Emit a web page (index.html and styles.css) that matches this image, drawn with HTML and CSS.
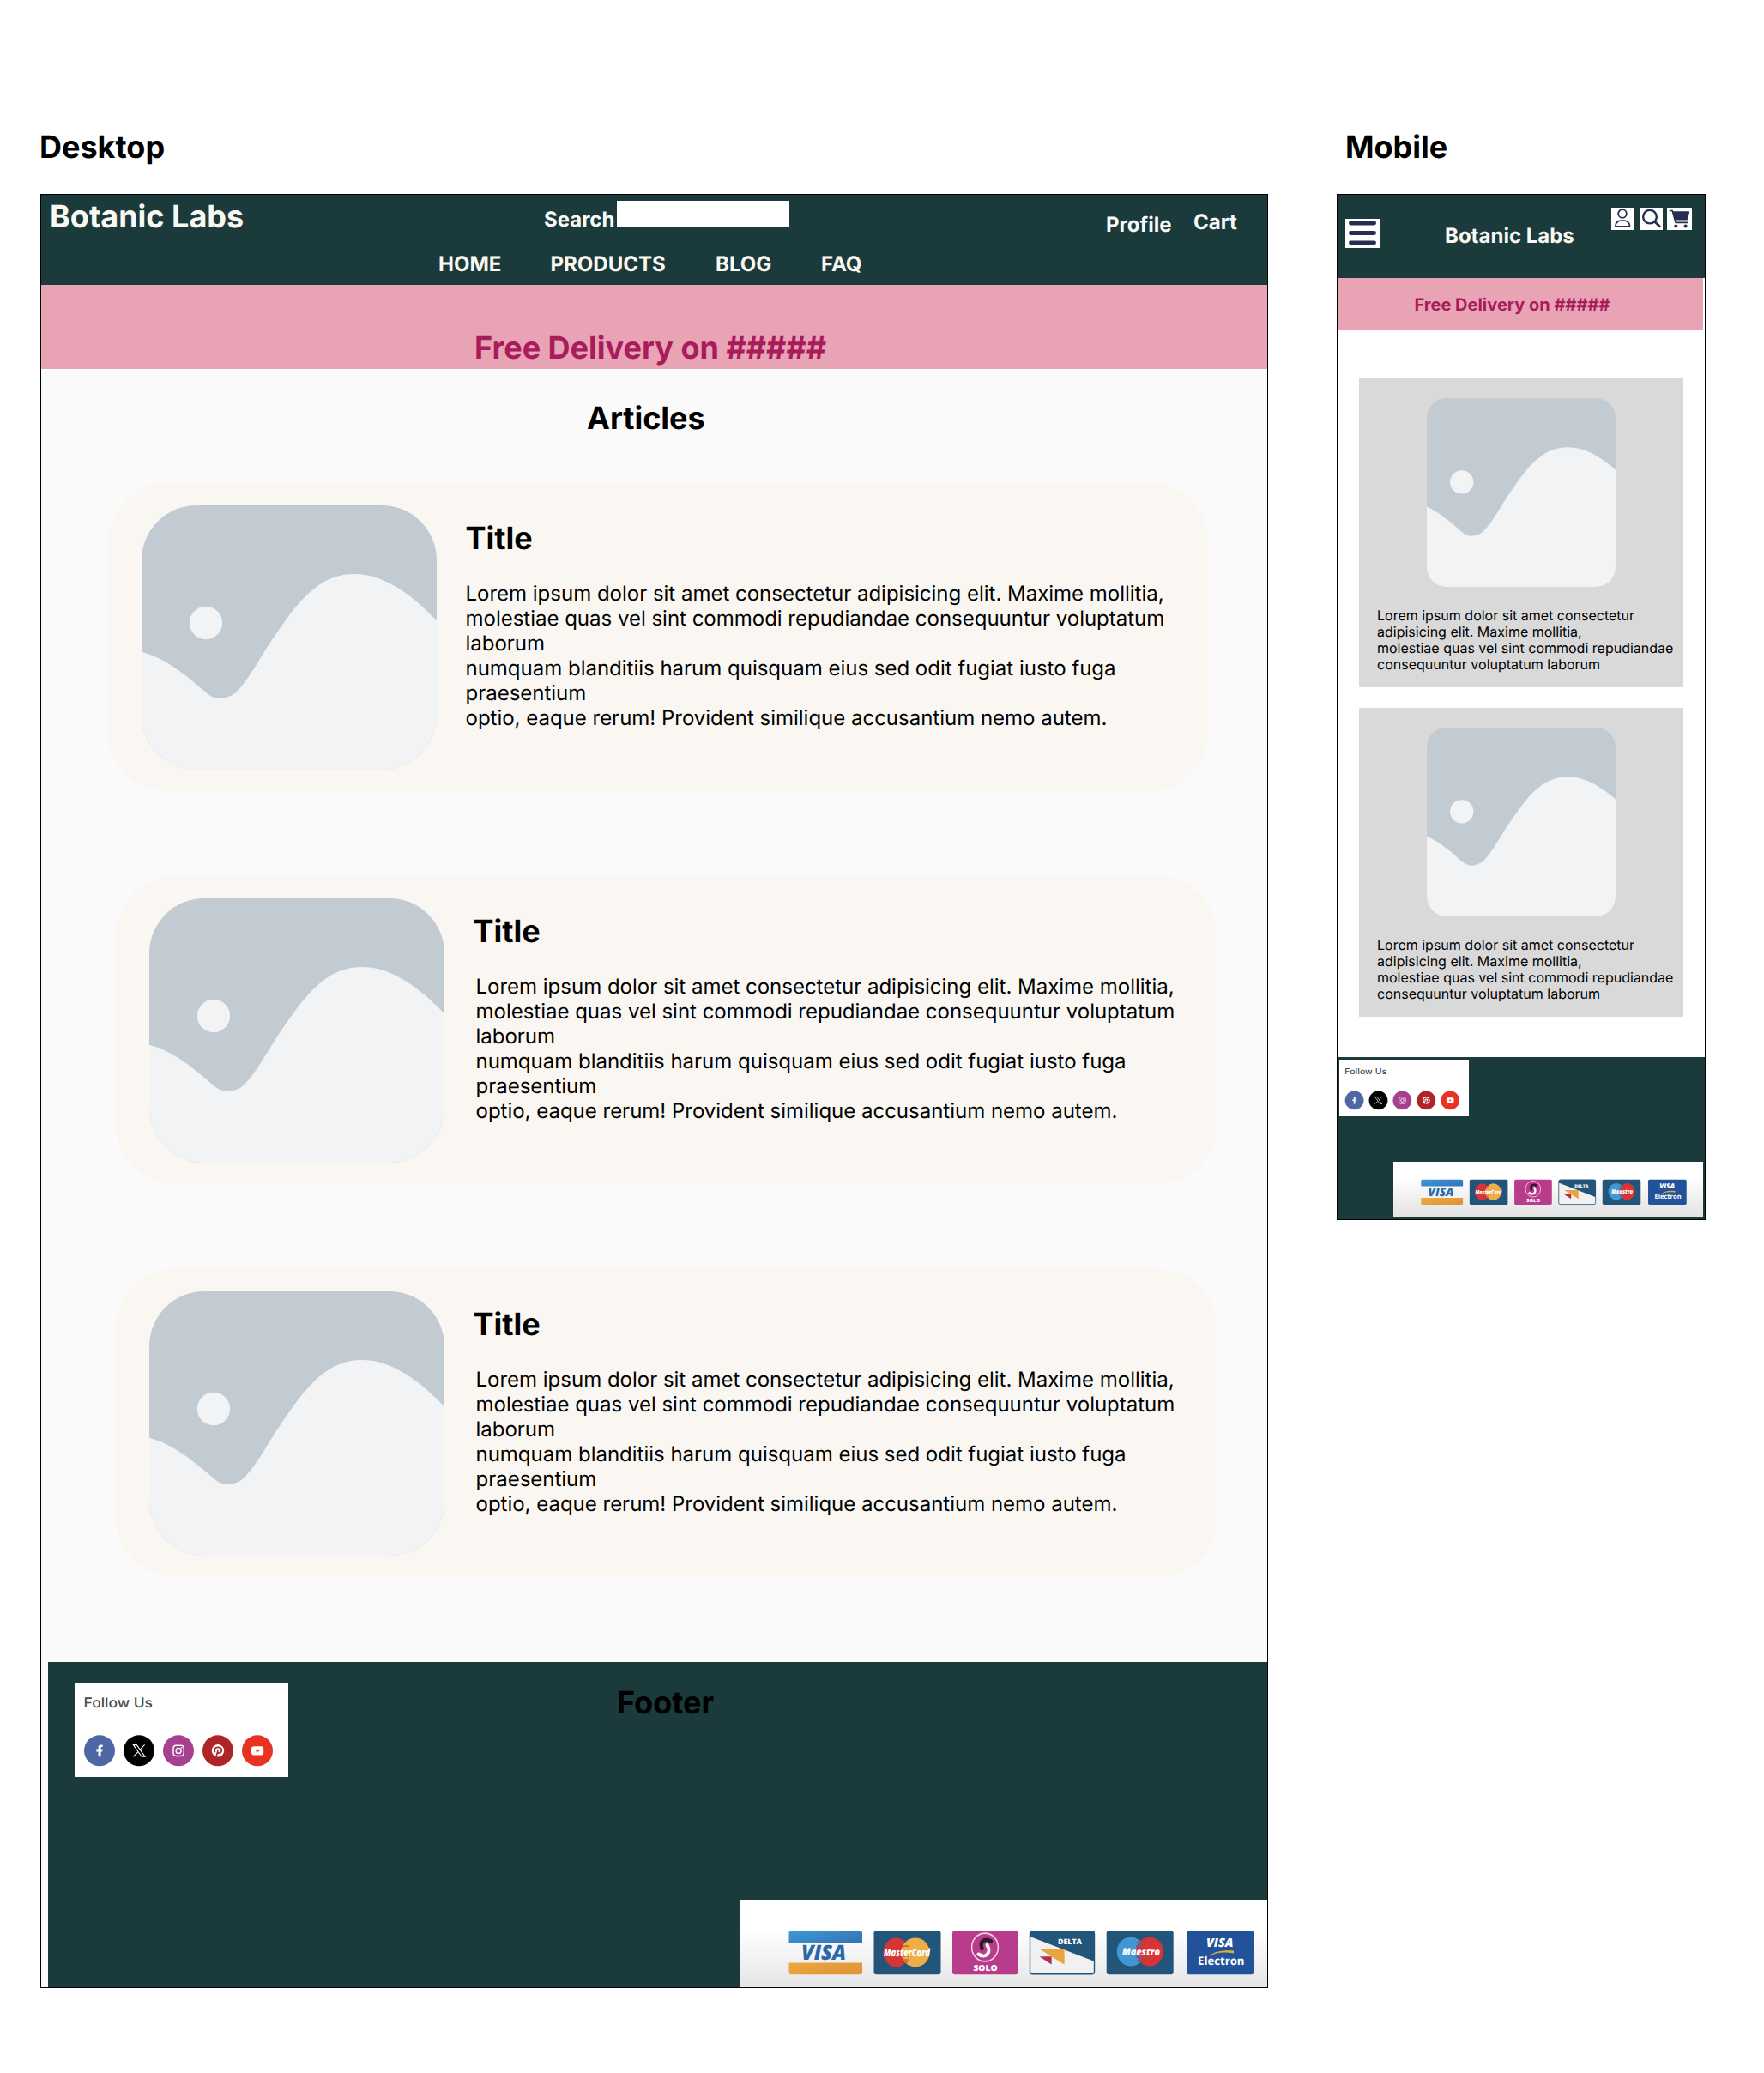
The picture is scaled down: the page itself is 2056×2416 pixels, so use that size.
FILE: index.html
```html
<!DOCTYPE html>
<html lang="en">
<head>
<meta charset="utf-8">
<title>Botanic Labs – Articles</title>
<link rel="stylesheet" href="styles.css">
</head>
<body>
<svg class="defs" aria-hidden="true">
  <symbol id="placeholder" viewBox="0 0 344 308">
    <rect width="344" height="308" fill="#c2cad2"/>
    <path d="M0 170.7C28 178 52 198 75 218C86 228 98 226 108 219.5C124 206 140 173 158 148C184 110 208 80 248.3 80C280 80 314 102 344 134.7V308H0Z" fill="#f1f3f5"/>
    <circle cx="75" cy="137" r="19.2" fill="#f1f3f5"/>
  </symbol>
  <linearGradient id="strip" x1="0" y1="0" x2="0" y2="1"><stop offset=".3" stop-color="#fff"/><stop offset="1" stop-color="#e2e2e2"/></linearGradient>
  <linearGradient id="visaBlue" x1="0" y1="0" x2="1" y2=".6"><stop offset="0" stop-color="#3f9ad4"/><stop offset="1" stop-color="#3578ba"/></linearGradient>
  <linearGradient id="visaGold" x1="0" y1="0" x2="1" y2=".6"><stop offset="0" stop-color="#ecaa40"/><stop offset="1" stop-color="#e29438"/></linearGradient>
</svg>

<main class="board">
  <section class="desktop">
    <h2 class="label">Desktop</h2>
    <div class="frame frame-desktop">
      <header class="top">
        <div class="top-row">
          <span class="brand">Botanic Labs</span>
          <label class="search-label" for="q">Search</label>
          <input class="search-box" id="q" type="text">
          <span class="profile">Profile</span>
          <span class="cart">Cart</span>
        </div>
        <nav class="nav"><span>HOME</span><span>PRODUCTS</span><span>BLOG</span><span>FAQ</span></nav>
      </header>
      <div class="banner">Free Delivery on #####</div>
      <div class="heading">
        <div class="ghost"><span>Plants</span><span>Blog</span><span>FAQ</span></div>
        <h1 class="page-title">Articles</h1>
      </div>
      <div class="articles">
        <article class="card card-first">
          <svg class="card-image" viewBox="0 0 344 308"><use href="#placeholder" width="344" height="308"/></svg>
          <div class="card-body"><h3>Title</h3>
          <p>Lorem ipsum dolor sit amet consectetur adipisicing elit. Maxime mollitia,<br>molestiae quas vel sint commodi repudiandae consequuntur voluptatum<br>laborum<br>numquam blanditiis harum quisquam eius sed odit fugiat iusto fuga<br>praesentium<br>optio, eaque rerum! Provident similique accusantium nemo autem.</p></div>
        </article>
        <article class="card">
          <svg class="card-image" viewBox="0 0 344 308"><use href="#placeholder" width="344" height="308"/></svg>
          <div class="card-body"><h3>Title</h3>
          <p>Lorem ipsum dolor sit amet consectetur adipisicing elit. Maxime mollitia,<br>molestiae quas vel sint commodi repudiandae consequuntur voluptatum<br>laborum<br>numquam blanditiis harum quisquam eius sed odit fugiat iusto fuga<br>praesentium<br>optio, eaque rerum! Provident similique accusantium nemo autem.</p></div>
        </article>
        <article class="card">
          <svg class="card-image" viewBox="0 0 344 308"><use href="#placeholder" width="344" height="308"/></svg>
          <div class="card-body"><h3>Title</h3>
          <p>Lorem ipsum dolor sit amet consectetur adipisicing elit. Maxime mollitia,<br>molestiae quas vel sint commodi repudiandae consequuntur voluptatum<br>laborum<br>numquam blanditiis harum quisquam eius sed odit fugiat iusto fuga<br>praesentium<br>optio, eaque rerum! Provident similique accusantium nemo autem.</p></div>
        </article>
      </div>
      <footer class="foot">
        <div class="foot-top">
          <svg class="social" viewBox="0 0 249 109">
            <g id="social">
              <rect width="249" height="109" fill="#fff"/>
              <text x="10.5" y="27.8" class="social-text" textLength="80.5" lengthAdjust="spacingAndGlyphs">Follow Us</text>
              <circle cx="29" cy="78.3" r="18" fill="#4f67a5"/>
              <circle cx="75" cy="78.3" r="18"/>
              <circle cx="121" cy="78.3" r="18" fill="#a5418f"/>
              <circle cx="167" cy="78.3" r="18" fill="#ae2427"/>
              <circle cx="213" cy="78.3" r="18" fill="#ea3223"/>
              <path d="M27.6 85.2V79.4H25.3V76.6H27.6V74.8C27.6 72.6 28.8 71.6 30.8 71.6H32.6V74.1H31.5C30.8 74.1 30.5 74.5 30.5 75.2V76.6H32.6L32.2 79.4H30.5V85.2Z" fill="#fff"/>
              <path d="M68.4 71.6H72.3L82 85.2H78.1ZM81.6 71.4L76 77.4M73.8 79.8L68.4 85.4" fill="none" stroke="#fff" stroke-width="1.1"/>
              <g fill="none" stroke="#fff" stroke-width="1.4"><rect x="115" y="72.3" width="12.2" height="12.2" rx="3.4"/><circle cx="121.1" cy="78.4" r="3"/></g>
              <circle cx="124.7" cy="74.9" r=".8" fill="#fff"/>
              <circle cx="167" cy="78.3" r="7.2" fill="#fff"/>
              <path d="M163.8 80.1C161.9 77.2 163.6 74.3 167.2 74.3C170.2 74.3 171.7 76.3 171.2 78.6C170.6 81.4 167.6 82 166.6 80.1M167.3 76.9L165 85.6" fill="none" stroke="#ae2427" stroke-width="1.7"/>
              <rect x="206" y="73.2" width="14.2" height="10.4" rx="3" fill="#fff"/>
              <path d="M211.6 76.2L215.6 78.4L211.6 80.6Z" fill="#ea3223"/>
            </g>
          </svg>
          <h2 class="foot-title">Footer</h2>
        </div>
        <svg class="payments" viewBox="0 0 614 102">
          <g id="payments">
            <rect width="632" height="112" fill="url(#strip)"/>
            <path d="M56.5 50V39Q56.5 36.3 59.2 36.3H139.3Q142 36.3 142 39V50Z" fill="url(#visaBlue)"/>
            <path d="M56.5 73.6H142V84.6Q142 87.3 139.3 87.3H59.2Q56.5 87.3 56.5 84.6Z" fill="url(#visaGold)"/>
            <text x="71" y="70.3" class="pay pay-slant" font-size="24" fill="#2968aa" textLength="52" lengthAdjust="spacingAndGlyphs">VISA</text>
            <rect x="155.5" y="36.3" width="78" height="51" rx="3" fill="#23547a"/>
            <ellipse cx="181.5" cy="61.4" rx="15" ry="17" fill="#d53535"/>
            <ellipse cx="204" cy="61.4" rx="16.5" ry="17" fill="#edae4a"/>
            <path d="M191 50H194M189 54H196M188 66H196M189 70H196M191 73H195" stroke="#d5602f" stroke-width="1.6"/>
            <text x="167" y="66" class="pay pay-slant" font-size="12.5" fill="#fff" textLength="54" lengthAdjust="spacingAndGlyphs">MasterCard</text>
            <rect x="247" y="36.3" width="76.5" height="51" rx="3" fill="#b83b8c"/>
            <ellipse cx="285" cy="55.5" rx="15.4" ry="16.4" fill="none" stroke="#f3c9e3" stroke-width="1.6"/>
            <path d="M281.5 57C278.5 48 285 44.5 292 48.5" fill="none" stroke="#2a1b2b" stroke-width="4.4" stroke-linecap="round"/>
            <path d="M287.5 53C293 61 286 69.5 277.5 63.5" fill="none" stroke="#fff" stroke-width="4" stroke-linecap="round"/>
            <text x="271.5" y="82.5" class="pay" font-size="9.5" fill="#fff" textLength="28" lengthAdjust="spacingAndGlyphs">SOLO</text>
            <rect x="337.5" y="37" width="75" height="49.8" rx="3" fill="#f1f1f2" stroke="#23547a" stroke-width="1.4"/>
            <path d="M337.5 43V39Q337.5 36.3 340 36.3H410Q413 36.3 413 39V72Z" fill="#23547a"/>
            <text x="370" y="52.4" class="pay" font-size="8.8" fill="#fff" textLength="28" lengthAdjust="spacingAndGlyphs">DELTA</text>
            <path d="M348.5 57.6H377.6V75.6Z" fill="#eaa43d"/>
            <path d="M348.5 66.3H362.7V75.6Z" fill="#b12d52"/>
            <rect x="426.7" y="36.3" width="78" height="51" rx="3" fill="#23547a"/>
            <ellipse cx="455" cy="60.6" rx="16.3" ry="17" fill="#4296d2"/>
            <ellipse cx="477" cy="60.6" rx="16" ry="17" fill="#d83437"/>
            <path d="M461 50H469M461 54H470M461 67H471M462 71H469" stroke="#4a6aa0" stroke-width="1.4"/>
            <text x="445" y="65.4" class="pay pay-slant" font-size="12" fill="#fff" textLength="44" lengthAdjust="spacingAndGlyphs">Maestro</text>
            <rect x="520" y="36.3" width="78.3" height="51" rx="3" fill="#22539a"/>
            <text x="543" y="54.8" class="pay pay-slant" font-size="14" fill="#fff" textLength="31.5" lengthAdjust="spacingAndGlyphs">VISA</text>
            <path d="M546 66C552 60.5 560 58.6 575 59.4V62.4C562 60.6 555 61.6 546 66Z" fill="#e3a83d"/>
            <text x="533" y="75.8" class="pay pay-electron" font-size="13.4" fill="#fff" textLength="54.5" lengthAdjust="spacingAndGlyphs">Electron</text>
          </g>
        </svg>
      </footer>
    </div>
  </section>

  <section class="mobile">
    <h2 class="label">Mobile</h2>
    <div class="frame frame-mobile">
      <header class="m-top">
        <svg class="m-menu" viewBox="0 0 41 34"><rect width="41" height="34" fill="#fff"/><path d="M6.4 5H33.6M6.4 16.5H33.6M6.4 27.8H33.6" stroke="#222f50" stroke-width="4.8" stroke-linecap="round"/></svg>
        <span class="m-brand">Botanic Labs</span>
        <svg class="m-icon m-user" viewBox="0 0 26 26"><rect width="26" height="26" fill="#fff"/><g fill="none" stroke="#222f50" stroke-width="1.8"><circle cx="13" cy="7" r="4.8"/><path d="M5 22V21C5 17.5 8 15.2 11 15.2H15.2C18.5 15.2 21.5 17.8 21.5 21V22Z" stroke-linejoin="round"/></g></svg>
        <svg class="m-icon m-search" viewBox="0 0 27 26"><rect width="27" height="26" fill="#fff"/><g fill="none" stroke="#222f50" stroke-linecap="round"><circle cx="12" cy="10.6" r="7.8" stroke-width="2.4"/><path d="M17.8 16.4L23.4 21.8" stroke-width="2.8"/></g></svg>
        <svg class="m-icon m-cart" viewBox="0 0 29 26"><rect width="29" height="26" fill="#fff"/><path d="M3.4 3.5H6.2L10 17.4H23.6" fill="none" stroke="#222f50" stroke-width="1.6" stroke-linecap="round" stroke-linejoin="round"/><path d="M6.6 4.2H25.2Q26.4 4.2 26.1 5.4L24 13.4Q23.7 14.6 22.4 14.6H9.6Z" fill="#222f50"/><circle cx="10.3" cy="21.5" r="2" fill="#222f50"/><circle cx="21.6" cy="21.5" r="2" fill="#222f50"/></svg>
      </header>
      <div class="m-banner">Free Delivery on #####</div>
      <div class="m-list">
        <article class="m-card">
          <svg class="m-image" viewBox="18 0 308 308"><use href="#placeholder" width="344" height="308"/></svg>
          <p>Lorem ipsum dolor sit amet consectetur<br>adipisicing elit. Maxime mollitia,<br>molestiae quas vel sint commodi repudiandae<br>consequuntur voluptatum laborum</p>
        </article>
        <article class="m-card">
          <svg class="m-image" viewBox="18 0 308 308"><use href="#placeholder" width="344" height="308"/></svg>
          <p>Lorem ipsum dolor sit amet consectetur<br>adipisicing elit. Maxime mollitia,<br>molestiae quas vel sint commodi repudiandae<br>consequuntur voluptatum laborum</p>
        </article>
      </div>
      <footer class="m-foot">
        <svg class="m-social" viewBox="0 0 249 109" preserveAspectRatio="none"><use href="#social"/></svg>
        <svg class="m-payments" viewBox="0 0 632 112" preserveAspectRatio="none"><use href="#payments"/></svg>
      </footer>
    </div>
  </section>
</main>
</body>
</html>
```
FILE: styles.css
```css
* { box-sizing: border-box; }

body {
  margin: 0;
  background: #fff;
  color: #000;
  font-family: Inter, "Liberation Sans", sans-serif;
  text-rendering: geometricPrecision;
}

h1, h2, h3, p { margin: 0; }
svg { display: block; }
.defs { position: absolute; width: 0; height: 0; }

.board {
  display: flex;
  align-items: flex-start;
  gap: 80px;
  padding: 149px 0 0 47px;
}

.label {
  font-size: 36px;
  line-height: 44px;
  font-weight: 700;
  height: 77px;
  white-space: nowrap;
}
.desktop .label { margin-left: -1px; }
.mobile .label { margin-left: 10px; }

.frame { border: 1px solid #000; }
.frame-desktop {
  display: flex;
  flex-direction: column;
  width: 1431px;
  height: 2091px;
  background: #fafafa;
}
.frame-mobile {
  display: flex;
  flex-direction: column;
  width: 430px;
  height: 1196px;
  background: #fff;
}

/* Desktop header */
.top {
  height: 105px;
  background: #1b3a3c;
  color: #fbf7f1;
  font-weight: 700;
  font-size: 24px;
  line-height: 29px;
}
.top-row {
  display: grid;
  grid-template-columns: 576px 85px 201px 369px 102px auto;
  align-items: start;
  height: 66px;
  padding-left: 10px;
}
.brand { font-size: 36px; line-height: 44px; margin-top: 3px; }
.search-label { margin-top: 14px; color: #fafafa; }
.search-box {
  width: 201px;
  height: 31px;
  margin-top: 7px;
  padding: 0;
  border: 0;
  background: #fff;
}
.profile { grid-column: 5; margin-top: 20px; color: #fafafa; }
.cart { grid-column: 6; margin-top: 17px; color: #fafafa; }
.nav {
  display: grid;
  grid-template-columns: 130.5px 192.5px 123px auto;
  padding-left: 463px;
}

.banner {
  height: 98px;
  padding: 51px 0 0 505px;
  background: #e8a3b5;
  color: #a81c5c;
  font-size: 36px;
  line-height: 44px;
  font-weight: 700;
}

.heading { display: flex; height: 133px; padding: 34px 0 0 50px; }
.ghost {
  display: flex;
  width: 586px;
  gap: 50px;
  padding-top: 15px;
  color: #f8fafb;
  font-size: 24px;
  line-height: 29px;
  font-weight: 700;
}
.page-title { margin-top: 1px; font-size: 36px; line-height: 44px; font-weight: 700; }

.articles {
  display: flex;
  flex-direction: column;
  gap: 99px;
  height: 1374px;
  padding-left: 87px;
}
.card {
  display: flex;
  flex: none;
  width: 1283px;
  height: 359px;
  padding: 26px 0 0 39px;
  border-radius: 68px;
  background: #faf7f2;
}
.card-first { margin-left: -9px; }
.card-image { width: 344px; height: 308px; border-radius: 64px; }
.card-body { padding: 16px 0 0 33.5px; }
.card-body h3 { font-size: 36px; line-height: 44px; font-weight: 700; }
.card-body p {
  margin: 28px 0 0 3px;
  font-size: 24px;
  line-height: 29px;
  letter-spacing: -.01px;
  white-space: nowrap;
}
.card-first p { margin-left: 0; }

.foot {
  display: flex;
  flex-direction: column;
  justify-content: space-between;
  height: 379px;
  margin-left: 8px;
  background: #1b3a3c;
}
.foot-top { display: flex; padding: 25px 0 0 31px; }
.social { width: 249px; height: 109px; }
.foot-title { margin-left: 383px; font-size: 36px; line-height: 44px; font-weight: 700; }
.payments { align-self: flex-end; width: 614px; height: 102px; overflow: hidden; }

.social-text { font-family: Inter, sans-serif; font-size: 16px; font-weight: 500; fill: #4a4a4a; }
.pay { font-family: "Open Sans", sans-serif; font-weight: 800; }
.pay-slant { font-style: italic; }
.pay-electron { font-weight: 700; }

/* Mobile */
.m-top {
  display: flex;
  align-items: flex-start;
  height: 97px;
  padding-left: 9px;
  background: #1b3a3c;
}
.m-menu { width: 41px; height: 34px; margin-top: 28px; }
.m-brand {
  width: 194px;
  margin: 33px 0 0 75px;
  color: #fbf7f1;
  font-size: 24px;
  line-height: 29px;
  font-weight: 700;
}
.m-icon { flex: none; height: 26px; margin-top: 15px; }
.m-user { width: 26px; }
.m-search { width: 27px; margin-left: 7px; }
.m-cart { width: 29px; margin-left: 5px; }
.m-banner {
  width: 426px;
  height: 61px;
  padding: 19px 0 0 89.5px;
  background: #e8a3b5;
  color: #a81c5c;
  font-size: 20px;
  line-height: 24px;
  font-weight: 700;
}
.m-list {
  display: flex;
  flex-direction: column;
  gap: 24px;
  height: 847px;
  padding: 56px 0 0 25px;
}
.m-card { width: 378px; height: 360px; padding-top: 23px; background: #d9d9d9; }
.m-image { width: 220px; height: 220px; margin-left: 79px; border-radius: 23px; }
.m-card p { margin: 24px 0 0 21px; font-size: 16px; line-height: 19px; white-space: nowrap; }
.m-foot {
  display: flex;
  flex-direction: column;
  justify-content: space-between;
  flex: 1;
  padding: 3px 2px;
  background: #1b3a3c;
}
.m-social { width: 151px; height: 66px; }
.m-payments { align-self: flex-end; width: 361px; height: 64px; }
```
